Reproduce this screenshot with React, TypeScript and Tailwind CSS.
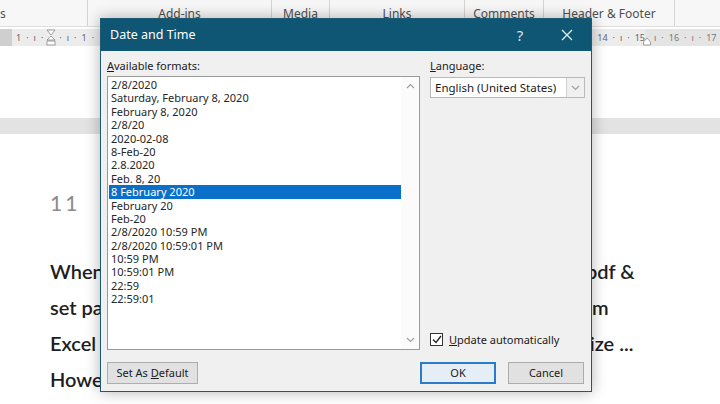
import React from 'react';

const formats = [
  '2/8/2020',
  'Saturday, February 8, 2020',
  'February 8, 2020',
  '2/8/20',
  '2020-02-08',
  '8-Feb-20',
  '2.8.2020',
  'Feb. 8, 20',
  '8 February 2020',
  'February 20',
  'Feb-20',
  '2/8/2020 10:59 PM',
  '2/8/2020 10:59:01 PM',
  '10:59 PM',
  '10:59:01 PM',
  '22:59',
  '22:59:01',
];

const SELECTED = 8;

const ui = { fontFamily: '"Noto Sans", "Open Sans", sans-serif' };
const doc = { fontFamily: 'Lato, "Open Sans", sans-serif' };

const RibbonGroup: React.FC<{ label: string; w: string }> = ({ label, w }) => (
  <div className={`${w} h-full border-r border-[#d4d4d4] flex items-end justify-center pb-[3px] text-[12px] text-[#505050]`}>
    {label}
  </div>
);

const Chevron: React.FC<{ up?: boolean }> = ({ up }) => (
  <svg width="9" height="6" viewBox="0 0 9 6" className="text-[#a0a0a0]">
    <path d={up ? 'M1 5 L4.5 1.5 L8 5' : 'M1 1 L4.5 4.5 L8 1'} fill="none" stroke="currentColor" strokeWidth="1.2" />
  </svg>
);

const App: React.FC = () => {
  return (
    <div className="relative w-[720px] h-[404px] overflow-hidden bg-white" style={ui}>
      {/* ribbon group labels */}
      <div className="flex h-[27px] bg-[#f7f7f7] border-b border-[#dedede]">
        <RibbonGroup label="s" w="w-[88px] justify-start! pl-0" />
        <RibbonGroup label="Add-ins" w="w-[184px]" />
        <RibbonGroup label="Media" w="w-[58px]" />
        <RibbonGroup label="Links" w="w-[135px]" />
        <RibbonGroup label="Comments" w="w-[79px]" />
        <RibbonGroup label="Header & Footer" w="w-[131px]" />
        <div className="flex-1" />
      </div>

      {/* ruler */}
      <div className="flex items-center h-[17px] mt-[2px] bg-[#e4e4e4] text-[9px] text-[#666]">
        <div className="w-[12px] h-full bg-[#cfcfcf]" />
        <div className="flex items-center gap-[5px] pl-[4px] w-[633px] h-full bg-[#ececec]">
          <span>1</span><span>·</span><span>ı</span><span>·</span>
          <svg width="10" height="17" viewBox="0 0 10 17" className="-mx-[2px]">
            <path d="M1 1 L9 1 L5 6 Z M5 7 L9 11 L1 11 Z" fill="#fff" stroke="#888" strokeWidth="0.8" />
            <rect x="1" y="12" width="8" height="4" fill="#fff" stroke="#888" strokeWidth="0.8" />
          </svg>
          <span>·</span><span>ı</span><span>·</span><span>1</span><span>·</span>
          <div className="flex-1" />
          <span>14</span><span>·</span><span>ı</span><span>·</span><span>15</span>
        </div>
        <svg width="8" height="17" viewBox="0 0 8 17" className="-ml-[2px]">
          <path d="M4 9 L7.5 13 L7.5 16 L0.5 16 L0.5 13 Z" fill="#fff" stroke="#888" strokeWidth="0.8" />
        </svg>
        <div className="flex items-center gap-[5px] pl-[3px] text-[#777]">
          <span>ı</span><span>·</span><span>16</span><span>·</span><span>ı</span><span>·</span><span>17</span>
        </div>
      </div>

      {/* page */}
      <div className="h-[72px]" />
      <div className="h-[16px] bg-[#e3e3e3]" />
      <div className="pl-[50px]" style={doc}>
        <div className="mt-[53px] text-[21px] text-[#8a8a8a] tracking-[3px]">11</div>
        <div className="mt-[40px] flex flex-col gap-[12px] text-[20px] font-semibold text-[#1e1e1e] leading-[24px]">
          <div className="flex">
            <span className="w-[50px] overflow-hidden whitespace-nowrap">When</span>
            <span className="ml-[486px]">pdf &amp;</span>
          </div>
          <div className="flex">
            <span className="w-[50px] overflow-hidden whitespace-nowrap">set pa</span>
            <span className="ml-[492px]">m</span>
          </div>
          <div className="flex">
            <span className="w-[50px] overflow-hidden whitespace-nowrap">Excel</span>
            <span className="ml-[481px]">size ...</span>
          </div>
          <div className="flex">
            <span className="w-[50px] overflow-hidden whitespace-nowrap">Howe</span>
          </div>
        </div>
      </div>

      {/* dialog */}
      <div className="absolute left-[100px] top-[18px] w-[492px] h-[374px] flex flex-col bg-[#f0f0f0] border border-[#1d5a74] shadow-[0_0_14px_rgba(0,0,0,0.3)]">
        <div className="h-[32px] shrink-0 bg-[#0f5574] flex items-center text-white">
          <span className="pl-[9px] text-[12.5px] flex-1">Date and Time</span>
          <span className="w-[46px] text-center text-[15px] text-[#cfe6ef]">?</span>
          <span className="w-[48px] flex justify-center">
            <svg width="12" height="12" viewBox="0 0 12 12">
              <path d="M1 1 L11 11 M11 1 L1 11" stroke="#d8ecf3" strokeWidth="1.4" />
            </svg>
          </span>
        </div>

        <div className="flex-1 flex flex-col px-[6px] pt-[9px] pb-[8px] text-[11px] text-[#1a1a1a]">
          <div className="flex flex-1">
            <div className="w-[313px] flex flex-col">
              <div className="h-[12px] leading-[12px] mb-[4px]"><span className="underline">A</span>vailable formats:</div>
              <div className="flex h-[274px] bg-white border border-[#9a9a9a]">
                <div className="flex-1 pt-[1px] pl-[1px]">
                  {formats.map((f, i) => (
                    <div
                      key={f}
                      className={`h-[13.4px] leading-[13.4px] pl-[2px] whitespace-nowrap ${i === SELECTED ? 'bg-[#0a6fc9] text-white' : 'text-[#262626]'}`}
                    >
                      {f}
                    </div>
                  ))}
                </div>
                <div className="w-[18px] flex flex-col items-center justify-between py-[6px] bg-[#fbfbfb]">
                  <Chevron up />
                  <Chevron />
                </div>
              </div>
            </div>

            <div className="ml-[10px] w-[155px] flex flex-col">
              <div className="h-[12px] leading-[12px] mb-[5px]"><span className="underline">L</span>anguage:</div>
              <div className="flex h-[21px] bg-white border border-[#b9b9b9]">
                <span className="flex-1 pl-[4px] leading-[19px] text-[11.5px]">English (United States)</span>
                <span className="w-[18px] flex items-center justify-center border-l border-[#cfcfcf] bg-[#f0f0f0]">
                  <Chevron />
                </span>
              </div>
              <div className="flex-1" />
              <div className="flex items-center gap-[6px] mb-[2px]">
                <span className="w-[13px] h-[13px] border border-[#333] bg-white flex items-center justify-center">
                  <svg width="10" height="9" viewBox="0 0 10 9">
                    <path d="M1 4.5 L4 7.5 L9 1" fill="none" stroke="#222" strokeWidth="1.3" />
                  </svg>
                </span>
                <span><span className="underline">U</span>pdate automatically</span>
              </div>
            </div>
          </div>

          <div className="flex mt-[12px] h-[22px]">
            <div className="w-[91px] flex items-center justify-center bg-[#e1e1e1] border border-[#adadad]">
              Set As <span className="underline ml-[3px]">D</span>efault
            </div>
            <div className="flex-1" />
            <div className="w-[76px] flex items-center justify-center bg-[#e5eef6] border-2 border-[#2a7ccb]">OK</div>
            <div className="w-[76px] ml-[12px] mr-[1px] flex items-center justify-center bg-[#e1e1e1] border border-[#adadad]">Cancel</div>
          </div>
        </div>
      </div>
    </div>
  );
};

export default App;
